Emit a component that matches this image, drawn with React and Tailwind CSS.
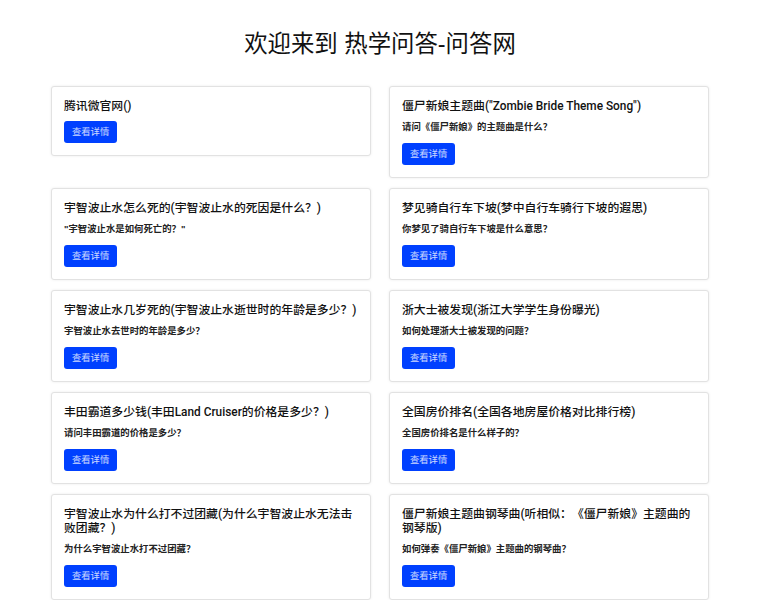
import React from 'react';

const items = [
  { title: '腾讯微官网()', question: '' },
  { title: '僵尸新娘主题曲("Zombie Bride Theme Song")', question: '请问《僵尸新娘》的主题曲是什么？' },
  { title: '宇智波止水怎么死的(宇智波止水的死因是什么？)', question: '"宇智波止水是如何死亡的？"' },
  { title: '梦见骑自行车下坡(梦中自行车骑行下坡的遐思)', question: '你梦见了骑自行车下坡是什么意思？' },
  { title: '宇智波止水几岁死的(宇智波止水逝世时的年龄是多少？)', question: '宇智波止水去世时的年龄是多少？' },
  { title: '浙大士被发现(浙江大学学生身份曝光)', question: '如何处理浙大士被发现的问题？' },
  { title: '丰田霸道多少钱(丰田Land Cruiser的价格是多少？)', question: '请问丰田霸道的价格是多少？' },
  { title: '全国房价排名(全国各地房屋价格对比排行榜)', question: '全国房价排名是什么样子的？' },
  { title: '宇智波止水为什么打不过团藏(为什么宇智波止水无法击败团藏？)', question: '为什么宇智波止水打不过团藏？' },
  { title: '僵尸新娘主题曲钢琴曲(听相似：《僵尸新娘》主题曲的钢琴版)', question: '如何弹奏《僵尸新娘》主题曲的钢琴曲？' },
];

const QuestionCard = ({ item }) => (
  <div className="bg-white border border-[#e2e2e2] rounded-[3px] shadow-[0_0_3px_rgba(0,0,0,0.08)] p-3 flex flex-col items-start">
    {/* Title */}
    <h3 className="font-['Roboto','Noto_Sans_CJK_SC',sans-serif] text-[11.85px] leading-[14px] font-medium text-[#111] mb-2">
      {item.title}
    </h3>
    {item.question && (
      <p className="text-[9.4px] leading-[11px] font-semibold text-[#222] mb-[11px]">{item.question}</p>
    )}
    <button className="block h-[22px] px-2 rounded-[3px] bg-[#0040ff] text-[9.3px] text-white/80 leading-[22px]">
      查看详情
    </button>
  </div>
);

export default function App() {
  return (
    <div
      className="min-h-screen bg-white pt-[31px] [text-spacing-trim:space-all]"
      style={{ fontFamily: '"Liberation Sans", "Noto Sans CJK SC", sans-serif' }}
    >
      <h1 className="text-center text-[23.4px] leading-[26px] font-normal text-[#111] mb-[29px]">
        欢迎来到 热学问答-问答网
      </h1>

      <div className="w-[658px] mx-auto grid grid-cols-2 gap-x-[18px] gap-y-[10px] items-start">
        {items.map((item, i) => (
          <QuestionCard key={i} item={item} />
        ))}
      </div>
    </div>
  );
}
